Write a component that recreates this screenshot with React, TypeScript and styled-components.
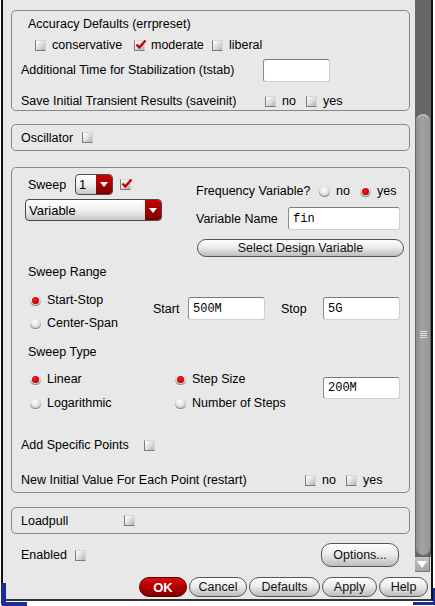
import React from "react";
import styled, { createGlobalStyle } from "styled-components";

const Global = createGlobalStyle`
  html, body { margin: 0; padding: 0; background: #fff; }
  body {
    font-family: "Liberation Sans", Arial, Helvetica, sans-serif;
    font-size: 12.5px;
    color: #000;
  }
  * { box-sizing: border-box; }
`;

const Window = styled.div`
  width: 435px;
  height: 606px;
  background: #fff;
  position: relative;
  overflow: hidden;
  &::before {
    content: "";
    position: absolute;
    left: 1px;
    top: 583px;
    width: 21px;
    height: 19px;
    border-left: 5px solid #1c2a9c;
    border-bottom: 4px solid #1c2a9c;
    border-bottom-left-radius: 3px;
  }
  &::after {
    content: "";
    position: absolute;
    left: 413px;
    top: 588px;
    width: 20px;
    height: 14px;
    border-right: 5px solid #1c2a9c;
    border-bottom: 3px solid #1c2a9c;
    border-bottom-right-radius: 3px;
  }
`;

const Frame = styled.div`
  margin-left: 1px;
  width: 432px;
  height: 601px;
  border-left: 2px solid #111;
  border-right: 2px solid #111;
  border-bottom: 2px solid #333;
  background: #e8e8e8;
  display: flex;
  flex-direction: column;
`;

const Main = styled.div`
  display: flex;
  height: 574px;
`;

const Content = styled.div`
  width: 412px;
  padding: 10px 5px 0 8px;
  display: flex;
  flex-direction: column;
`;

const Panel = styled.div<{ $mt?: number }>`
  border: 1px solid #878787;
  border-radius: 5px;
  margin-top: ${(p) => p.$mt ?? 0}px;
  padding-left: 9px;
  display: flex;
  flex-direction: column;
`;

const Row = styled.div<{ $h: number; $mt?: number; $pl?: number; $mb?: number }>`
  display: flex;
  align-items: center;
  height: ${(p) => p.$h}px;
  margin-top: ${(p) => p.$mt ?? 0}px;
  margin-bottom: ${(p) => p.$mb ?? 0}px;
  padding-left: ${(p) => p.$pl ?? 0}px;
  flex: none;
`;

const Label = styled.span<{ $w?: number; $ml?: number }>`
  white-space: nowrap;
  margin-left: ${(p) => p.$ml ?? 0}px;
  ${(p) => (p.$w ? `width: ${p.$w}px; flex: none;` : "")}
`;

const Item = styled.span<{ $w?: number }>`
  display: flex;
  align-items: center;
  gap: 6px;
  white-space: nowrap;
  ${(p) => (p.$w ? `width: ${p.$w}px; flex: none;` : "")}
`;

const Spacer = styled.span<{ $w: number }>`
  width: ${(p) => p.$w}px;
  flex: none;
`;

const BoxWrap = styled.span`
  position: relative;
  width: 11px;
  height: 11px;
  flex: none;
  display: inline-block;
  background: linear-gradient(135deg, #ffffff 0%, #e2e2e2 45%, #b4b4b4 100%);
  border: 1px solid #d6d6d6;
  border-left-color: #7c7c7c;
  border-bottom-color: #7c7c7c;
  svg {
    position: absolute;
    left: 0px;
    top: -3px;
  }
`;

const Check = ({ on }: { on?: boolean }) => (
  <BoxWrap>
    {on && (
      <svg width="12" height="12" viewBox="0 0 12 12">
        <path d="M1.5 6.5 L4.3 9.5 L10.5 2.5" fill="none" stroke="#c80000" strokeWidth="2.4" strokeLinejoin="miter" />
      </svg>
    )}
  </BoxWrap>
);

const RadioDot = styled.span<{ $on?: boolean }>`
  position: relative;
  width: 11px;
  height: 11px;
  flex: none;
  border-radius: 50%;
  background: radial-gradient(circle at 45% 35%, #ffffff 0%, #e6e6e6 40%, #a8a8a8 100%);
  box-shadow: inset 0 -1px 0 #8c8c8c;
  &::after {
    content: "";
    display: ${(p) => (p.$on ? "block" : "none")};
    position: absolute;
    left: 2px;
    top: 2px;
    width: 7px;
    height: 7px;
    border-radius: 50%;
    background: radial-gradient(circle at 45% 40%, #ff2020 0%, #d00000 55%, #500000 100%);
  }
`;

const Field = styled.div<{ $w: number; $h: number; $ml?: number }>`
  width: ${(p) => p.$w}px;
  height: ${(p) => p.$h}px;
  margin-left: ${(p) => p.$ml ?? 0}px;
  flex: none;
  background: #fff;
  border: 1px solid #cfcfcf;
  border-top-color: #7a7a7a;
  border-left-color: #8a8a8a;
  border-radius: 3px;
  display: flex;
  align-items: center;
  padding-left: 4px;
  font-family: "Liberation Mono", "Courier New", monospace;
  font-size: 12px;
`;

const Combo = styled.div<{ $w: number; $h: number; $ml?: number }>`
  width: ${(p) => p.$w}px;
  height: ${(p) => p.$h}px;
  margin-left: ${(p) => p.$ml ?? 0}px;
  flex: none;
  display: flex;
  border: 1px solid #4a4a4a;
  border-radius: 4px;
  overflow: hidden;
  background: linear-gradient(#ffffff, #f0f0f0 50%, #c8c8c8);
`;

const ComboText = styled.span`
  flex: 1;
  display: flex;
  align-items: center;
  padding-left: 3px;
  font-size: 13px;
`;

const ComboArrow = styled.span`
  width: 16px;
  flex: none;
  background: linear-gradient(#c80000, #9a0000 60%, #7a0000);
  display: flex;
  align-items: center;
  justify-content: center;
  &::after {
    content: "";
    border-left: 4px solid transparent;
    border-right: 4px solid transparent;
    border-top: 5px solid #fff;
  }
`;

const Pill = styled.div<{ $w: number; $h: number; $primary?: boolean; $ml?: number }>`
  width: ${(p) => p.$w}px;
  height: ${(p) => p.$h}px;
  margin-left: ${(p) => p.$ml ?? 0}px;
  flex: none;
  display: flex;
  align-items: center;
  justify-content: center;
  border-radius: 10px;
  border: 1px solid ${(p) => (p.$primary ? "#5a0000" : "#555")};
  background: ${(p) =>
    p.$primary
      ? "linear-gradient(#d81010, #b00000 50%, #800000)"
      : "linear-gradient(#ffffff, #ececec 45%, #bcbcbc)"};
  color: ${(p) => (p.$primary ? "#fff" : "#111")};
  font-weight: ${(p) => (p.$primary ? "bold" : "normal")};
  font-size: ${(p) => (p.$primary ? "13px" : "12.5px")};
  white-space: nowrap;
`;

const TopBlock = styled.div`
  display: flex;
  flex: none;
`;

const Col = styled.div<{ $w: number; $pt?: number }>`
  width: ${(p) => p.$w}px;
  padding-top: ${(p) => p.$pt ?? 0}px;
  display: flex;
  flex-direction: column;
  flex: none;
`;

const Block = styled.div<{ $mt?: number }>`
  display: flex;
  flex: none;
  margin-top: ${(p) => p.$mt ?? 0}px;
`;

const FooterRow = styled.div`
  display: flex;
  align-items: center;
  justify-content: space-between;
  height: 24px;
  margin-top: 9px;
  padding: 0 11px 0 10px;
`;

const Scroll = styled.div`
  width: 16px;
  display: flex;
  flex-direction: column;
`;

const Track = styled.div`
  height: 557px;
  background: #666666;
  padding: 114px 1px 0 1px;
`;

const Thumb = styled.div`
  height: 441px;
  border-radius: 7px;
  background: linear-gradient(90deg, #8e8e8e, #a2a2a2 40%, #979797);
  box-shadow: inset 0 2px 0 #b4b4b4;
  display: flex;
  align-items: center;
  justify-content: center;
`;

const Grip = styled.div`
  width: 7px;
  height: 8px;
  background: repeating-linear-gradient(#e0e0e0 0 1px, transparent 1px 2px);
`;

const ArrowBtn = styled.div`
  height: 15px;
  width: 15px;
  background: linear-gradient(#c4c4c4, #a4a4a4);
  border-right: 1px solid #777;
  border-bottom: 1px solid #777;
  display: flex;
  align-items: center;
  justify-content: center;
  &::after {
    content: "";
    border-left: 5px solid transparent;
    border-right: 5px solid transparent;
    border-top: 7px solid #fff;
  }
`;

const ButtonBar = styled.div`
  height: 25px;
  display: flex;
  justify-content: flex-end;
  gap: 2px;
  padding: 3px 3px 0 0;
`;

export default function App() {
  return (
    <>
      <Global />
      <Window>
        <Frame>
          <Main>
            <Content>
              <Panel>
                <Row $h={20} $mt={3} $pl={7}>
                  <Label>Accuracy Defaults (errpreset)</Label>
                </Row>
                <Row $h={20} $mt={1} $pl={14}>
                  <Item $w={99}><Check />conservative</Item>
                  <Item $w={78}><Check on />moderate</Item>
                  <Item><Check />liberal</Item>
                </Row>
                <Row $h={24} $mt={3}>
                  <Label $w={242}>Additional Time for Stabilization (tstab)</Label>
                  <Field $w={67} $h={23} />
                </Row>
                <Row $h={18} $mt={10}>
                  <Label $w={244}>Save Initial Transient Results (saveinit)</Label>
                  <Item $w={41}><Check />no</Item>
                  <Item><Check />yes</Item>
                </Row>
              </Panel>

              <Panel $mt={13}>
                <Row $h={25}>
                  <Label $w={61}>Oscillator</Label>
                  <Check />
                </Row>
              </Panel>

              <Panel $mt={16}>
                <TopBlock>
                  <Col $w={175} $pt={6}>
                    <Row $h={21} $pl={7}>
                      <Label $w={47}>Sweep</Label>
                      <Combo $w={38} $h={21}>
                        <ComboText>1</ComboText>
                        <ComboArrow />
                      </Combo>
                      <Spacer $w={7} />
                      <Check on />
                    </Row>
                    <Row $h={22} $mt={4}>
                      <Combo $w={137} $h={22} $ml={4}>
                        <ComboText>Variable</ComboText>
                        <ComboArrow />
                      </Combo>
                    </Row>
                  </Col>
                  <Col $w={210} $pt={13}>
                    <Row $h={20}>
                      <Label $w={123}>Frequency Variable?</Label>
                      <Item $w={41}><RadioDot />no</Item>
                      <Item><RadioDot $on />yes</Item>
                    </Row>
                    <Row $h={23} $mt={6}>
                      <Label $w={92}>Variable Name</Label>
                      <Field $w={112} $h={23}>fin</Field>
                    </Row>
                    <Row $h={18} $mt={9}>
                      <Pill $w={207} $h={18} $ml={1}>Select Design Variable</Pill>
                    </Row>
                  </Col>
                </TopBlock>

                <Row $h={16} $mt={7} $pl={7}>
                  <Label>Sweep Range</Label>
                </Row>
                <Block $mt={10}>
                  <Col $w={132}>
                    <Row $h={20} $pl={9}>
                      <Item><RadioDot $on />Start-Stop</Item>
                    </Row>
                    <Row $h={20} $mt={3} $pl={9}>
                      <Item><RadioDot />Center-Span</Item>
                    </Row>
                  </Col>
                  <Row $h={23} $mt={7}>
                    <Label $w={35}>Start</Label>
                    <Field $w={77} $h={23}>500M</Field>
                    <Label $w={42} $ml={16}>Stop</Label>
                    <Field $w={77} $h={23}>5G</Field>
                  </Row>
                </Block>

                <Row $h={16} $mt={11} $pl={7}>
                  <Label>Sweep Type</Label>
                </Row>
                <Block $mt={9}>
                  <Col $w={154}>
                    <Row $h={20} $pl={9}>
                      <Item><RadioDot $on />Linear</Item>
                    </Row>
                    <Row $h={20} $mt={4} $pl={9}>
                      <Item><RadioDot />Logarithmic</Item>
                    </Row>
                  </Col>
                  <Col $w={148}>
                    <Row $h={20}>
                      <Item><RadioDot $on />Step Size</Item>
                    </Row>
                    <Row $h={20} $mt={4}>
                      <Item><RadioDot />Number of Steps</Item>
                    </Row>
                  </Col>
                  <Col $w={77} $pt={8}>
                    <Field $w={77} $h={22}>200M</Field>
                  </Col>
                </Block>

                <Row $h={20} $mt={22}>
                  <Label $w={123}>Add Specific Points</Label>
                  <Check />
                </Row>
                <Row $h={20} $mt={15} $mb={2}>
                  <Label $w={284}>New Initial Value For Each Point (restart)</Label>
                  <Item $w={41}><Check />no</Item>
                  <Item><Check />yes</Item>
                </Row>
              </Panel>

              <Panel $mt={14}>
                <Row $h={25}>
                  <Label $w={103}>Loadpull</Label>
                  <Check />
                </Row>
              </Panel>

              <FooterRow>
                <Row $h={24}>
                  <Label $w={54}>Enabled</Label>
                  <Check />
                </Row>
                <Pill $w={78} $h={24}>Options...</Pill>
              </FooterRow>
            </Content>
            <Scroll>
              <Track>
                <Thumb>
                  <Grip />
                </Thumb>
              </Track>
              <ArrowBtn />
            </Scroll>
          </Main>
          <ButtonBar>
            <Pill $w={48} $h={20} $primary>OK</Pill>
            <Pill $w={58} $h={20}>Cancel</Pill>
            <Pill $w={71} $h={20}>Defaults</Pill>
            <Pill $w={55} $h={20}>Apply</Pill>
            <Pill $w={49} $h={20}>Help</Pill>
          </ButtonBar>
        </Frame>
      </Window>
    </>
  );
}
